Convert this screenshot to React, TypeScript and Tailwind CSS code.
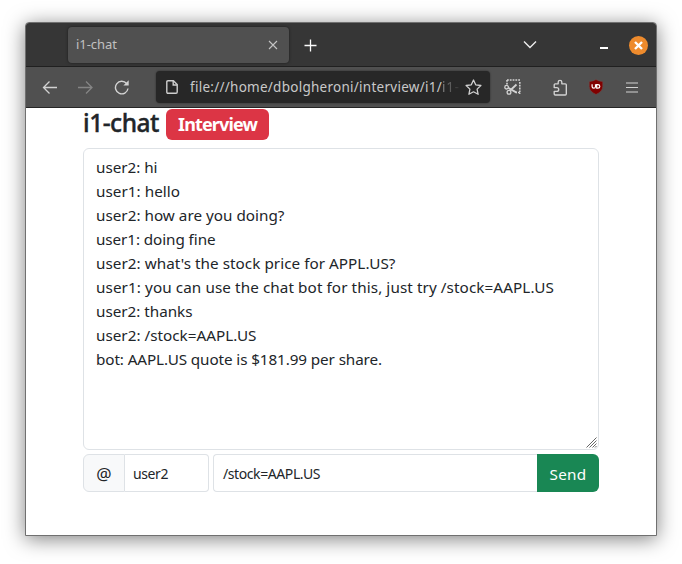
import { useLayoutEffect, useRef, useState } from "react";

/** Text whose letter spacing is adjusted so that it fills a given width. */
function Fit({ text, width, className = "" }: { text: string; width: number; className?: string }) {
  const ref = useRef<HTMLSpanElement>(null);
  const [spacing, setSpacing] = useState(0);
  useLayoutEffect(() => {
    if (ref.current) {
      const natural = ref.current.getBoundingClientRect().width - spacing * text.length;
      setSpacing((width - natural) / text.length);
    }
  }, [text, width]);
  return (
    <span ref={ref} className={`inline-block whitespace-pre ${className}`} style={{ letterSpacing: spacing }}>
      {text}
    </span>
  );
}

const messages = [
  { text: "user2: hi", width: 61.5 },
  { text: "user1: hello", width: 84 },
  { text: "user2: how are you doing?", width: 188.5 },
  { text: "user1: doing fine", width: 119.5 },
  { text: "user2: what's the stock price for APPL.US?", width: 299.5 },
  { text: "user1: you can use the chat bot for this, just try /stock=AAPL.US", width: 458 },
  { text: "user2: thanks", width: 96.5 },
  { text: "user2: /stock=AAPL.US", width: 160.5 },
  { text: "bot: AAPL.US quote is $181.99 per share.", width: 286 },
];

function TabStrip() {
  return (
    <div className="flex h-11 border-b border-[#202020] bg-[#363636] pl-[42px]">
      <div className="mt-1 flex h-9 w-[221px] items-center justify-between rounded bg-[#505050] pr-[11px] pl-2 text-[13px] text-[#c0c0c0] shadow-[0_0_3px_rgba(0,0,0,0.5)]">
        <Fit text="i1-chat" width={41} />
        <svg width="10" height="10" viewBox="0 0 10 10" stroke="#c4c4c4" strokeWidth="1.1">
          <path d="M1 1l8 8M9 1L1 9" />
        </svg>
      </div>
      <svg className="mt-4 ml-[15px]" width="13" height="13" viewBox="0 0 13 13" stroke="#fbfbfb" strokeWidth="1.3">
        <path d="M6.5 .5v12M.5 6.5h12" />
      </svg>
      <svg className="mt-[17px] ml-[206px]" width="14" height="10" viewBox="0 0 14 10" fill="none" stroke="#ededed" strokeWidth="1.4">
        <path d="M1 1.5l6 6 6-6" />
      </svg>
      <div className="mt-6 ml-[63px] h-[2px] w-2 bg-white" />
      <div className="mt-[12.5px] ml-[20.5px] flex size-[19px] items-center justify-center rounded-full bg-[#ee8b2d]">
        <svg width="9" height="9" viewBox="0 0 9 9" stroke="#fff" strokeWidth="2.4">
          <path d="M1 1l7 7M8 1L1 8" />
        </svg>
      </div>
    </div>
  );
}

function Toolbar() {
  return (
    <div className="flex h-[41px] items-center border-b border-[#252525] bg-[#505050] pl-4">
      <svg width="15" height="14" viewBox="0 0 15 14" fill="none" stroke="#d2d2d2" strokeWidth="1.3">
        <path d="M15 7.5H1.5M7.5 1.5l-6 6 6 6" />
      </svg>
      <svg className="ml-[21px]" width="15" height="14" viewBox="0 0 15 14" fill="none" stroke="#858585" strokeWidth="1.3">
        <path d="M0 7.5h14M8 1.5l6 6-6 6" />
      </svg>
      <svg className="ml-[21px]" width="16" height="16" viewBox="0 0 16 16" fill="none" stroke="#d2d2d2" strokeWidth="1.4">
        <path d="M14 9.5A6.3 6.3 0 1 1 12.6 4.5" />
        <path d="M14.7 1.2v5.3H9.4z" fill="#d2d2d2" stroke="none" />
      </svg>
      <div className="ml-[26px] flex h-8 w-[334px] items-center rounded bg-[#272727] pl-[10px] shadow-[0_0_2px_rgba(0,0,0,0.5)]">
        <svg width="12" height="14" viewBox="0 0 12 14" fill="none" stroke="#cecece" strokeWidth="1.4">
          <path d="M2 .8h5.4l3.8 3.8V12q0 1.2-1.2 1.2H2Q.8 13.2.8 12V2Q.8.8 2 .8z" />
          <path d="M7.2 1v4h4" />
        </svg>
        <div className="ml-3 flex w-[272px] text-[13.5px] leading-5">
          <Fit text="file:///home/dbolgheroni/interview/i1/" width={252} className="shrink-0 text-[#c9c9c9]" />
          <span className="w-5 shrink-0 bg-linear-to-r from-[#888888] to-[#272727] bg-clip-text text-transparent">
            <Fit text="i1-" width={18} />
          </span>
        </div>
        <svg className="ml-[3px] shrink-0" width="17" height="17" viewBox="0 0 17 17" fill="none" stroke="#d0d0d0" strokeWidth="1.3" strokeLinejoin="round">
          <path d="M8.5 1l2.2 4.8 5.2.7-3.8 3.6 1 5.2-4.6-2.5-4.6 2.5 1-5.2L1.1 6.5l5.2-.7z" />
        </svg>
      </div>
      <svg className="ml-[14px]" width="17" height="16" viewBox="0 0 17 16" fill="none" stroke="#d2d2d2" strokeWidth="1.3">
        <path d="M3 1h13.5M3 1v5M15.8 3v12M15.8 13.5H12" strokeWidth="1.6" strokeDasharray="1.8 1" />
        <circle cx="2.6" cy="8.2" r="1.8" />
        <circle cx="5" cy="13.2" r="1.9" />
        <path d="M4.2 8.7l8.4 4.9M6.1 11.5L12.5 5.5" strokeWidth="1.8" />
      </svg>
      <svg className="ml-[32px]" width="15" height="17" viewBox="0 0 15 17" fill="none" stroke="#d2d2d2" strokeWidth="1.35" strokeLinejoin="round">
        <path d="M1.2 7.4V5.8q0-1 1-1h3V3.1a1.8 1.8 0 0 1 3.6 0v1.7h3.5q1 0 1 1V15q0 1-1 1H2.2q-1 0-1-1v-2.6H3.8a1.9 1.9 0 0 0 0-3.8H1.2z" />
      </svg>
      <svg className="ml-[20px]" width="16" height="16" viewBox="0 0 16 16">
        <path d="M8 .5q3 1.8 6.8 2v4.9q0 5-6.8 8.1-6.8-3.1-6.8-8.1V2.5Q5 2.3 8 .5z" fill="#800000" stroke="#68514f" strokeWidth=".6" />
        <path d="M4.1 5.2v2.2q0 1.7 1.7 1.7t1.7-1.7V5.2M8.7 5.7h1.2q1.9 0 1.9 1.7T9.9 9.1H8.7z" fill="none" stroke="#fff" strokeWidth="1.2" />
      </svg>
      <svg className="ml-[22px]" width="12" height="11" viewBox="0 0 12 11" stroke="#d2d2d2" strokeWidth="1.2">
        <path d="M0 1h12M0 5.5h12M0 10h12" />
      </svg>
    </div>
  );
}

export default function App() {
  return (
    <div className="h-[564px] w-[682px] overflow-hidden bg-white pt-[22px] pl-[25px] font-['Noto_Sans',sans-serif] text-[#212529]">
      <div className="h-[514px] w-[632px] overflow-hidden rounded-t border border-[#707070] bg-white shadow-[0_3px_20px_rgba(0,0,0,0.5)]">
        <TabStrip />
        <Toolbar />
        <main className="pl-[57px]">
          <div className="flex h-10 items-start">
            <h1 className="w-[83px] text-[24.5px] leading-[29px] font-medium [-webkit-text-stroke:0.4px_#212529]">
              <Fit text="i1-chat" width={76} />
            </h1>
            <span className="mt-px flex h-[31px] w-[103px] items-center justify-center rounded-md bg-[#dc3545] text-[18px] font-bold text-white">
              <Fit text="Interview" width={79} />
            </span>
          </div>
          <div className="relative h-[302px] w-[516px] rounded-md border border-[#dee2e6] px-3 py-1.5 text-[15.25px] leading-6">
            {messages.map((m, i) => (
              <div key={i} className="h-6">
                <Fit text={m.text} width={m.width} />
              </div>
            ))}
            <svg className="absolute right-px bottom-px" width="11" height="11" viewBox="0 0 11 11" stroke="#666" strokeWidth="1">
              <path d="M.5 10.5l10-10M3.5 10.5l7-7M6.5 10.5l4-4M9 10.5L10.5 9" />
            </svg>
          </div>
          <div className="mt-1 flex h-[38px] w-[516px] text-[14px]">
            <div className="flex w-[42px] items-center justify-center rounded-l-md border border-[#dee2e6] bg-[#f8f9fa] pt-px text-[17px]">@</div>
            <div className="flex w-[84px] items-center rounded-r border border-l-0 border-[#dee2e6] pl-2">
              <Fit text="user2" width={35} />
            </div>
            <div className="ml-1 flex w-[324px] items-center rounded-l border border-r-0 border-[#dee2e6] pl-[9px]">
              <Fit text="/stock=AAPL.US" width={97} />
            </div>
            <button className="flex w-[62px] items-center justify-center rounded-r-md bg-[#198754] pt-0.5 text-[15.25px] text-white">
              <Fit text="Send" width={37} />
            </button>
          </div>
        </main>
      </div>
    </div>
  );
}
